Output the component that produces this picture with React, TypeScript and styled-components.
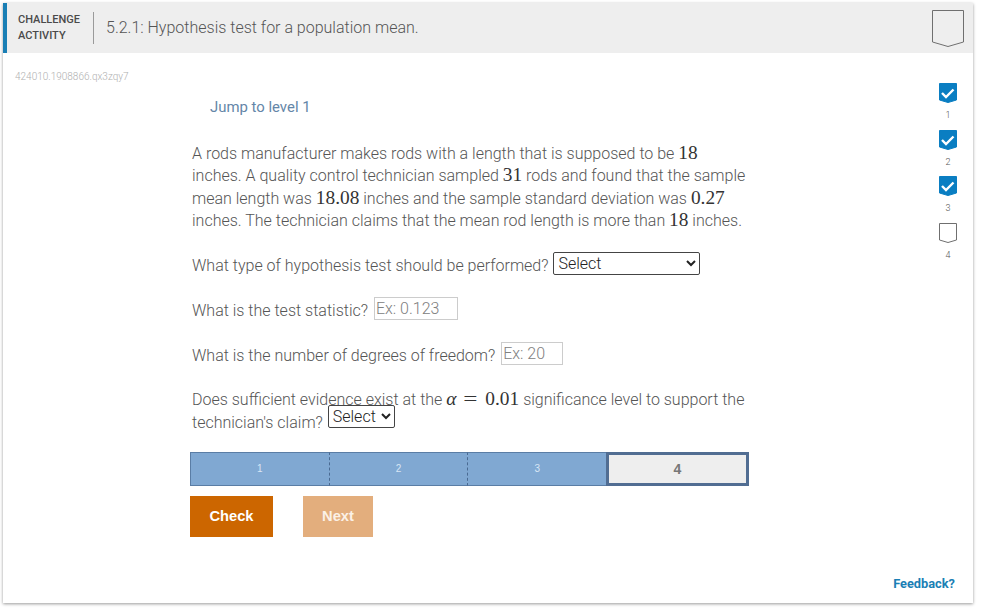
import React from 'react';
import styled, { createGlobalStyle } from 'styled-components';

const GlobalStyle = createGlobalStyle`
  html, body {
    margin: 0;
    padding: 0;
    background: #ffffff;
  }
  body {
    font-family: Roboto, "Liberation Sans", sans-serif;
  }
`;

const levels = [1, 2, 3, 4];

const Chevron = ({ size, done }: { size: 'large' | 'small'; done?: boolean }) => {
  const w = size === 'large' ? 32 : 18;
  const h = size === 'large' ? 37 : 20;
  const notch = size === 'large' ? 5 : 3;
  const outline = `M0.5 0.5H${w - 0.5}V${h - notch}L${w / 2} ${h - 0.5}L0.5 ${h - notch}Z`;
  return (
    <svg width={w} height={h} viewBox={`0 0 ${w} ${h}`}>
      <path d={outline} fill={done ? '#0a7ec2' : 'none'} stroke={done ? '#0a7ec2' : '#6f6f6f'} />
      {done && <path d="M3 10L7 14L14.5 6.5" fill="none" stroke="#ffffff" strokeWidth="2.4" />}
    </svg>
  );
};

const App = () => {
  return (
    <>
      <GlobalStyle />
      <Page>
        <Card>
          <Header>
            <Kind>
              CHALLENGE
              <br />
              ACTIVITY
            </Kind>
            <Title>5.2.1: Hypothesis test for a population mean.</Title>
            <Chevron size="large" />
          </Header>
          <Body>
            <Main>
              <ActivityId>424010.1908866.qx3zqy7</ActivityId>
              <JumpLink>Jump to level 1</JumpLink>
              <Question>
                <Paragraph>
                  A rods manufacturer makes rods with a length that is supposed to be <MathText>18</MathText> inches. A
                  quality control technician sampled <MathText>31</MathText> rods and found that the sample mean length
                  was <MathText>18.08</MathText> inches and the sample standard deviation was <MathText>0.27</MathText>{' '}
                  inches. The technician claims that the mean rod length is more than <MathText>18</MathText> inches.
                </Paragraph>
                <Prompt>
                  What type of hypothesis test should be performed?{' '}
                  <DropDown $width={147} $lift={2} defaultValue="Select">
                    <option>Select</option>
                  </DropDown>
                </Prompt>
                <Prompt>
                  What is the test statistic? <Answer $width={84} placeholder="Ex: 0.123" />
                </Prompt>
                <Prompt>
                  What is the number of degrees of freedom? <Answer $width={62} placeholder="Ex: 20" />
                </Prompt>
                <Prompt>
                  Does sufficient evidence exist at the{' '}
                  <MathText>
                    <em>α</em>
                    <Equals>=</Equals>0.01
                  </MathText>{' '}
                  significance level to support the technician's claim?{' '}
                  <DropDown $width={67} $lift={6} defaultValue="Select">
                    <option>Select</option>
                  </DropDown>
                </Prompt>
              </Question>
              <Progress>
                {levels.slice(0, 3).map((n) => (
                  <Step key={n}>{n}</Step>
                ))}
                <CurrentStep>4</CurrentStep>
              </Progress>
              <Actions>
                <CheckButton>Check</CheckButton>
                <NextButton>Next</NextButton>
              </Actions>
            </Main>
            <Rail>
              {levels.map((n) => (
                <RailItem key={n}>
                  <Chevron size="small" done={n < 4} />
                  <RailNumber>{n}</RailNumber>
                </RailItem>
              ))}
            </Rail>
          </Body>
          <Footer>
            <Feedback>Feedback?</Feedback>
          </Footer>
        </Card>
      </Page>
    </>
  );
};

const Page = styled.div`
  width: 983px;
  height: 609px;
  padding: 3px 0 0 3px;
  box-sizing: border-box;
  overflow: hidden;
`;

const Card = styled.div`
  width: 970px;
  height: 600px;
  background: #ffffff;
  box-shadow: 0 1px 3px rgba(0, 0, 0, 0.4);
  display: flex;
  flex-direction: column;
`;

const Header = styled.div`
  height: 50px;
  flex: none;
  box-sizing: border-box;
  display: flex;
  align-items: center;
  background: #eeeeee;
  border-left: 4px solid #1a7fb5;
  padding: 0 9px 0 11px;
`;

const Kind = styled.div`
  width: 76px;
  height: 32px;
  box-sizing: border-box;
  border-right: 1px solid #9a9a9a;
  font-size: 11px;
  font-weight: 500;
  line-height: 16px;
  color: #4a4a4a;
`;

const Title = styled.div`
  flex: 1;
  padding: 0 0 2px 12px;
  font-size: 16px;
  font-weight: 300;
  color: #555555;
`;

const Body = styled.div`
  flex: 1;
  display: flex;
`;

const Main = styled.div`
  flex: 1;
  padding: 18px 0 0 12px;
`;

const ActivityId = styled.div`
  font-size: 10px;
  font-weight: 300;
  line-height: 12px;
  color: #b0b0b0;
`;

const JumpLink = styled.div`
  margin: 15px 0 0 195px;
  font-size: 14.9px;
  line-height: 18px;
  color: #6486a8;
`;

const Question = styled.div`
  width: 556px;
  margin: 27px 0 0 177px;
  font-size: 16px;
  font-weight: 300;
  line-height: 22.4px;
  color: #555555;
`;

const Paragraph = styled.div`
  margin-bottom: 22.4px;
`;

const Prompt = styled.div`
  margin-bottom: 22.4px;
`;

const MathText = styled.span`
  font-family: "Liberation Serif", serif;
  font-size: 19.36px;
  font-weight: 400;
  line-height: 0;
  color: #333333;
`;

const Equals = styled.span`
  display: inline-block;
  margin: 0 9px;
  transform: scaleX(1.3);
`;

const DropDown = styled.select<{ $width: number; $lift: number }>`
  width: ${(props) => props.$width}px;
  height: 23px;
  box-sizing: border-box;
  margin: -12px 0 -8px 1px;
  vertical-align: ${(props) => props.$lift}px;
  font-family: Roboto, sans-serif;
  font-size: 16px;
  font-weight: 300;
  color: #222222;
  background: #ffffff;
  border: 1px solid #444444;
  border-radius: 2px;
  padding: 0;
`;

const Answer = styled.input<{ $width: number }>`
  width: ${(props) => props.$width}px;
  height: 23px;
  box-sizing: border-box;
  margin: -8px 0 -4px 2px;
  vertical-align: 2px;
  font-family: Roboto, sans-serif;
  font-size: 16px;
  font-weight: 300;
  border: 1px solid #cccccc;
  padding: 0 1px;
  &::placeholder {
    color: #808080;
    opacity: 1;
  }
`;

const Progress = styled.div`
  display: flex;
  width: 559px;
  height: 34px;
  margin: -5px 0 0 175px;
`;

const Step = styled.div`
  flex: 1;
  box-sizing: border-box;
  display: flex;
  align-items: center;
  justify-content: center;
  background: #80a8d2;
  border-top: 1px solid #5a7da5;
  border-bottom: 1px solid #5a7da5;
  border-left: 1px dashed #4a6a92;
  font-family: "Liberation Sans", sans-serif;
  font-size: 10px;
  color: #d8e6f5;
  &:first-child {
    border-left: 1px solid #5a7da5;
  }
`;

const CurrentStep = styled.div`
  width: 143px;
  box-sizing: border-box;
  display: flex;
  align-items: center;
  justify-content: center;
  background: #eeeeee;
  border: 3px solid #516d92;
  font-family: "Liberation Sans", sans-serif;
  font-size: 14px;
  font-weight: 700;
  color: #777777;
`;

const Actions = styled.div`
  display: flex;
  gap: 30px;
  margin: 10px 0 0 175px;
`;

const ActionButton = styled.button`
  height: 41px;
  padding: 0;
  border: none;
  font-family: "Liberation Sans", sans-serif;
  font-size: 14.7px;
  font-weight: 700;
  color: #ffffff;
`;

const CheckButton = styled(ActionButton)`
  width: 83px;
  background: #cc6600;
`;

const NextButton = styled(ActionButton)`
  width: 70px;
  background: #e3ae7d;
  color: #fbf1e6;
`;

const Rail = styled.div`
  width: 50px;
  padding: 30px 16px 0 0;
  box-sizing: border-box;
  display: flex;
  flex-direction: column;
  align-items: flex-end;
`;

const RailItem = styled.div`
  width: 18px;
  height: 46.7px;
  display: flex;
  flex-direction: column;
  align-items: center;
`;

const RailNumber = styled.div`
  margin-top: 7px;
  font-size: 9px;
  line-height: 11px;
  font-weight: 300;
  color: #555555;
`;

const Footer = styled.div`
  display: flex;
  justify-content: flex-end;
  padding: 0 18px 12px 0;
`;

const Feedback = styled.div`
  font-size: 12.8px;
  font-weight: 700;
  line-height: 14px;
  color: #1a7fb5;
`;

export default App;
